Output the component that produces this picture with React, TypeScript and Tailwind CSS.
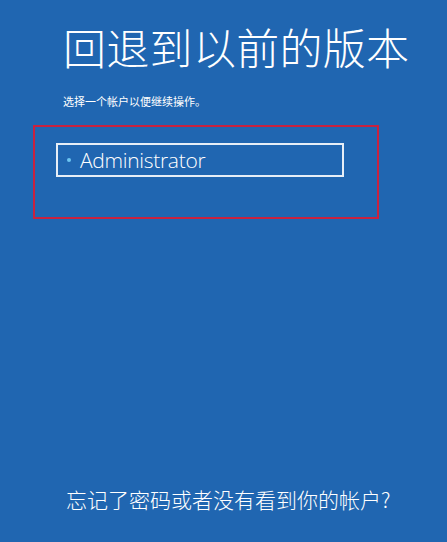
const cjk = {
	fontFamily: '"Noto Sans CJK SC", "Noto Sans", sans-serif',
};

export default function App() {
	return (
		<div
			className="w-[447px] h-[542px] bg-[#2066b1] text-white flex flex-col overflow-hidden"
			style={cjk}
		>
			<div className="pt-[19px] pl-[63px]">
				<h1 className="text-[43px] leading-[54px] font-light tracking-[0.3px]">
					回退到以前的版本
				</h1>
				<p className="mt-[21px] text-[11px] leading-[14px]">
					选择一个帐户以便继续操作。
				</p>
			</div>

			<div className="mt-[17px] ml-[33px] w-[346px] h-[94px] border-2 border-[#c9223f] pt-[16px] pl-[21px]">
				<button
					type="button"
					className="w-[288px] h-[34px] border-2 border-[#e6eef7] flex items-center gap-[9px] pl-[9px] text-left"
				>
					<span className="w-[4px] h-[4px] rounded-full bg-[#6cc6f2]" />
					<span
						className="text-[21px] font-light leading-none tracking-[-0.3px]"
						style={{ fontFamily: '"Open Sans", "Noto Sans", sans-serif' }}
					>
						Administrator
					</span>
				</button>
			</div>

			<div className="flex-1" />

			<p className="pl-[66px] pb-[30px] text-[21px] leading-[26px] font-light">
				忘记了密码或者没有看到你的帐户?
			</p>
		</div>
	);
}
